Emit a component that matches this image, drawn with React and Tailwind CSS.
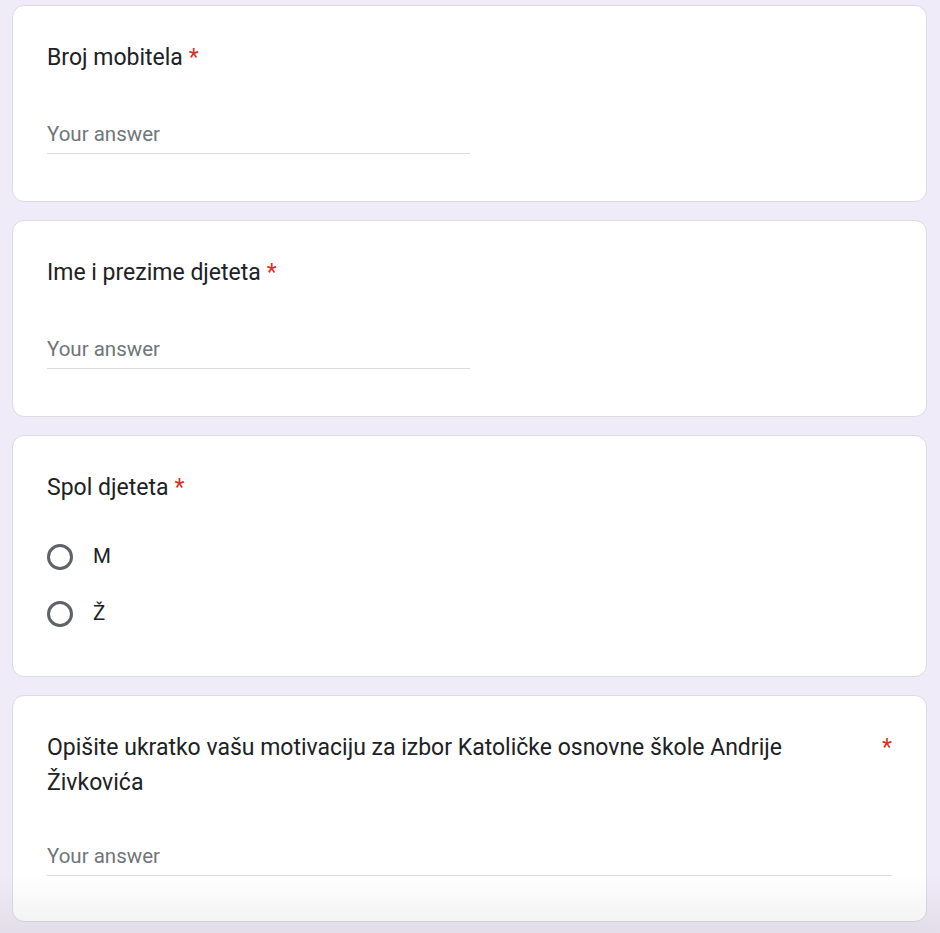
const Star = () => <span className="text-[#d93025] pl-[6px]">*</span>

function Card({ children, className = '' }) {
  return (
    <div className={`bg-white border border-[#dadce0] rounded-[12px] px-[34px] pt-[34px] ${className}`}>
      {children}
    </div>
  )
}

function AnswerLine({ half }) {
  return (
    <div className={`${half ? 'w-1/2' : 'w-full'} border-b border-[#dadce0] pb-[4px]`}>
      <div className="text-[20.5px] leading-[30px] text-[#70757a]">Your answer</div>
    </div>
  )
}

function TextQuestion({ title }) {
  return (
    <Card className="pb-[47px]">
      <div className="text-[23px] leading-[35px] text-[#202124]">
        {title}
        <Star />
      </div>
      <div className="mt-[44px]">
        <AnswerLine half />
      </div>
    </Card>
  )
}

function Radio({ label }) {
  return (
    <div className="h-[57px] flex items-center gap-[20px]">
      <div className="w-[26px] h-[26px] rounded-full border-[3px] border-[#5f6368]" />
      <span className="text-[20.5px] text-[#202124]">{label}</span>
    </div>
  )
}

export default function App() {
  return (
    <div className="relative min-h-[933px] bg-[#f0ebf8] pt-[5px] pl-[12px] pr-[13px] pb-[12px] overflow-hidden"
      style={{ fontFamily: 'Roboto, "Noto Sans", Arial, sans-serif' }}>
      <div className="flex flex-col gap-[18px]">
        <TextQuestion title="Broj mobitela" />
        <TextQuestion title="Ime i prezime djeteta" />

        <Card className="pb-[34px]">
          <div className="text-[23px] leading-[35px] text-[#202124]">
            Spol djeteta
            <Star />
          </div>
          <div className="mt-[23px]">
            <Radio label="M" />
            <Radio label="Ž" />
          </div>
        </Card>

        <Card className="pb-[45px]">
          <div className="flex text-[23px] leading-[35px] text-[#202124]">
            <div className="flex-1">
              Opišite ukratko vašu motivaciju za izbor Katoličke osnovne škole Andrije Živkovića
            </div>
            <span className="text-[#d93025] pl-[14px]">*</span>
          </div>
          <div className="mt-[41px]">
            <AnswerLine />
          </div>
        </Card>
      </div>

      {/* bottom shade from the screenshot */}
      <div className="pointer-events-none absolute left-0 right-0 bottom-0 h-[60px] bg-gradient-to-b from-transparent to-[#0000000f]" />
    </div>
  )
}
